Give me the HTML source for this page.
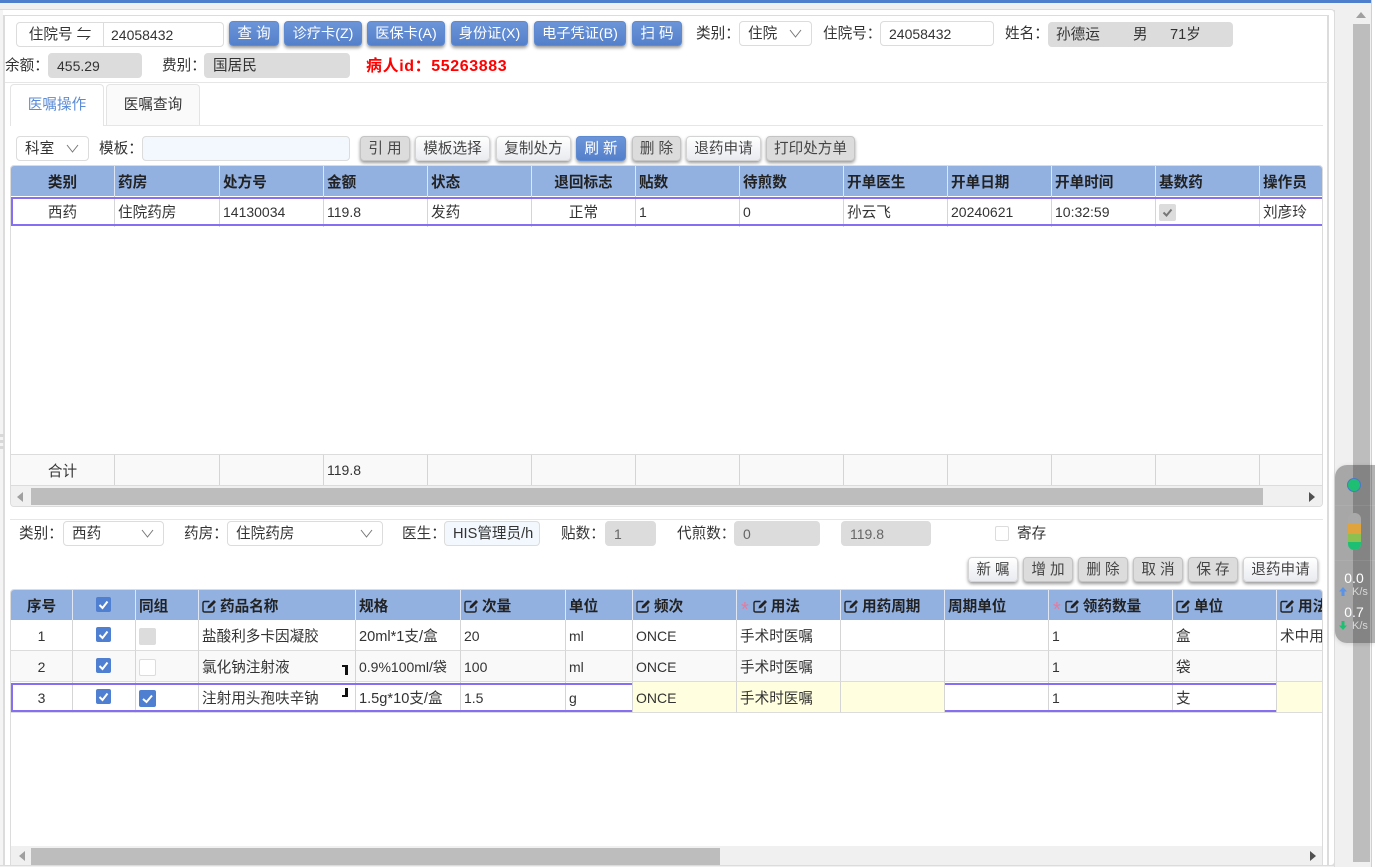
<!DOCTYPE html>
<html lang="zh-CN"><head><meta charset="utf-8"><title>医嘱操作</title>
<style>
html,body{margin:0;padding:0;width:1375px;height:867px;overflow:hidden;background:#fff}
body{font-family:"Liberation Sans","Noto Sans CJK SC",sans-serif;font-size:14.6px;color:#333;position:relative}
.a{position:absolute;box-sizing:border-box;white-space:nowrap}
.n,td.n{font-size:14px}
.m{font-size:14.2px}
.l{line-height:27px;height:25px}
.f{height:25px;line-height:25px;border:1px solid #dcdcdc;border-radius:4px;background:#fff;padding-left:8px;color:#333}
.d{background:#dcdcdc;border-color:#dcdcdc}
.s{background:#f2f8fd}
.b{height:25px;line-height:25px;border-radius:4px;text-align:center;border:1px solid #c9c9c9;box-shadow:0 2px 3px rgba(0,0,0,.4);color:#444}
.bl{background:linear-gradient(#6c95d8,#5480cb);border-color:#5e8ad2;color:#fff}
.gr{background:#dcdcdc;border-color:#c4c4c4}
.li{background:linear-gradient(#fff,#e9ebf0);border-color:#d4d4d4}
.sel svg{position:absolute;right:9px;top:7px}
table{border-collapse:separate;border-spacing:0;table-layout:fixed;position:absolute}
td{box-sizing:border-box;padding:0 0 0 3px;border-right:1px solid #d5d5d5;white-space:nowrap;overflow:hidden;color:#333}
tr.h td{background:#92b1e1;font-weight:700;color:#222;height:30px;border-right:1px solid #dfe7f3}
tr.r td{border-bottom:1px solid #dcdcdc;height:31px;padding-top:1px}
td.c{text-align:center;padding-left:0;padding-right:0}
td.z,tr.h td.z{border-right:0}
.ln{position:absolute;background:#e6e6e6}
.pu{position:absolute;background:#866ff0}
.cb{position:absolute;width:15px;height:15px;border-radius:2px;background:#4f7fd0}
.cb svg,.cg svg{position:absolute;left:0;top:0}
.cg{position:absolute;width:17px;height:17px;border-radius:2px}
.e{display:inline-block;vertical-align:-2px;margin:0 3px 0 0}
.st{color:#e9799b;font-weight:400;font-size:20px;line-height:0;position:relative;top:5px;margin:0 4px 0 0}
</style></head><body>
<!-- top chrome -->
<div class="a" style="left:0;top:0;width:1371px;height:3px;background:#4e7fcc"></div>
<div class="a" style="left:0;top:3px;width:1371px;height:864px;background:#f0f0f0"></div>
<div class="a" style="left:1371px;top:0;width:4px;height:867px;background:#fff;border-left:1px solid #d0d0d0"></div>
<div class="a" style="left:-4px;top:9px;width:1339px;height:857px;background:#fff;border:1px solid #dcdcdc;border-radius:4px"></div>
<div class="a" style="left:0;top:10px;width:3px;height:855px;background:#f4f4f4"></div>
<div class="a" style="left:3px;top:15px;width:1326px;height:851px;background:#fff;border:1px solid #dcdcdc;border-width:1px 2px 0 2px"></div>
<div class="a" style="left:0;top:434px;width:4px;height:3px;background:#d8d8d8"></div>
<div class="a" style="left:0;top:440px;width:4px;height:3px;background:#d8d8d8"></div>
<div class="a" style="left:0;top:446px;width:4px;height:3px;background:#d8d8d8"></div>

<!-- right scrollbar -->
<div class="a" style="left:1334px;top:10px;width:37px;height:857px;background:#f0f0f0;border-left:1px solid #dcdcdc"></div>
<div class="a" style="left:1353px;top:24px;width:17px;height:838px;background:#bdbdbd"></div>
<svg class="a" style="left:1356px;top:12px" width="10" height="6"><path d="M5 0L10 6H0Z" fill="#a0a0a0"/></svg>

<!-- row 1 -->
<div class="a f" style="left:16px;top:22px;width:208px;padding-left:0"><span style="display:inline-block;width:86px;height:23px;border-right:1px solid #dcdcdc;text-align:center;vertical-align:top">住院号 ⇋</span><span class="n" style="margin-left:7px">24058432</span></div>
<div class="a b bl" style="left:229px;top:21px;width:50px">查 询</div>
<div class="a b bl m" style="left:284px;top:21px;width:78px">诊疗卡(Z)</div>
<div class="a b bl m" style="left:367px;top:21px;width:78px">医保卡(A)</div>
<div class="a b bl m" style="left:451px;top:21px;width:77px">身份证(X)</div>
<div class="a b bl m" style="left:534px;top:21px;width:92px">电子凭证(B)</div>
<div class="a b bl" style="left:632px;top:21px;width:50px">扫 码</div>
<div class="a l" style="left:696px;top:21px">类别：</div>
<div class="a f sel" style="left:739px;top:21px;width:73px">住院<svg width="13" height="9"><path d="M1 1L6.500 8L12 1" fill="none" stroke="#777"/></svg></div>
<div class="a l" style="left:823px;top:21px">住院号：</div>
<div class="a f n" style="left:880px;top:21px;width:114px">24058432</div>
<div class="a l" style="left:1005px;top:21px">姓名：</div>
<div class="a f d" style="left:1048px;top:22px;width:185px;padding-left:0"><span class="a" style="left:7px;top:0">孙德运</span><span class="a" style="left:84px;top:0">男</span><span class="a" style="left:121px;top:0">71岁</span></div>

<!-- row 2 -->
<div class="a l" style="left:5px;top:53px">余额：</div>
<div class="a f d n" style="left:48px;top:53px;width:94px">455.29</div>
<div class="a l" style="left:162px;top:53px">费别：</div>
<div class="a f d" style="left:204px;top:53px;width:146px">国居民</div>
<div class="a l" style="left:366px;top:53px;color:#f00;font-weight:700;font-size:16px;letter-spacing:.6px">病人id：55263883</div>
<div class="ln" style="left:5px;top:82px;width:1323px;height:1px"></div>

<!-- tabs -->
<div class="a" style="left:10px;top:84px;width:94px;height:42px;border:1px solid #e4e4e4;border-bottom:0;border-radius:4px 4px 0 0;background:#fff;color:#5b8bd6;text-align:center;line-height:40px;z-index:2">医嘱操作</div>
<div class="a" style="left:106px;top:84px;width:94px;height:41px;border:1px solid #e4e4e4;border-bottom:0;border-radius:4px 4px 0 0;background:#fafafa;text-align:center;line-height:40px">医嘱查询</div>
<div class="ln" style="left:10px;top:125px;width:1313px;height:1px"></div>

<!-- toolbar -->
<div class="a f sel" style="left:16px;top:136px;width:73px">科室<svg width="13" height="9"><path d="M1 1L6.500 8L12 1" fill="none" stroke="#777"/></svg></div>
<div class="a l" style="left:99px;top:136px">模板：</div>
<div class="a f s" style="left:142px;top:136px;width:208px"></div>
<div class="a b gr" style="left:360px;top:136px;width:50px">引 用</div>
<div class="a b li" style="left:415px;top:136px;width:75px">模板选择</div>
<div class="a b li" style="left:496px;top:136px;width:75px">复制处方</div>
<div class="a b bl" style="left:576px;top:136px;width:50px">刷 新</div>
<div class="a b gr" style="left:632px;top:136px;width:49px">删 除</div>
<div class="a b li" style="left:686px;top:136px;width:75px">退药申请</div>
<div class="a b gr" style="left:766px;top:136px;width:89px">打印处方单</div>

<!-- table 1 -->
<div class="a" style="left:10px;top:165px;width:1313px;height:342px;border:1px solid #dcdcdc;border-radius:4px;overflow:hidden;background:#fff">
<table style="left:0;top:0;width:1311px">
<colgroup><col style="width:104px"><col style="width:105px"><col style="width:104px"><col style="width:104px"><col style="width:104px"><col style="width:104px"><col style="width:104px"><col style="width:104px"><col style="width:104px"><col style="width:104px"><col style="width:104px"><col style="width:104px"><col style="width:62px"></colgroup>
<tr class="h"><td class="c">类别</td><td>药房</td><td>处方号</td><td>金额</td><td>状态</td><td class="c">退回标志</td><td>贴数</td><td>待煎数</td><td>开单医生</td><td>开单日期</td><td>开单时间</td><td>基数药</td><td class="z">操作员</td></tr>
<tr style="height:31px"><td class="c">西药</td><td>住院药房</td><td class="n">14130034</td><td class="n">119.8</td><td>发药</td><td class="c">正常</td><td class="n">1</td><td class="n">0</td><td>孙云飞</td><td class="n">20240621</td><td class="n">10:32:59</td><td></td><td class="z">刘彦玲</td></tr>
</table>
<div class="a" style="left:0;top:288px;width:1311px;height:32px;background:#f9f9f9;border-top:1px solid #dcdcdc;border-bottom:1px solid #dcdcdc">
<table style="left:0;top:0;width:1311px;height:30px"><colgroup><col style="width:104px"><col style="width:105px"><col style="width:104px"><col style="width:104px"><col style="width:104px"><col style="width:104px"><col style="width:104px"><col style="width:104px"><col style="width:104px"><col style="width:104px"><col style="width:104px"><col style="width:104px"><col style="width:62px"></colgroup>
<tr><td class="c">合计</td><td></td><td></td><td class="n">119.8</td><td></td><td></td><td></td><td></td><td></td><td></td><td></td><td></td><td class="z"></td></tr></table></div>
<div class="a" style="left:0;top:320px;width:1311px;height:20px;background:#f0f0f0"></div>
<div class="a" style="left:20px;top:322px;width:1232px;height:17px;background:#bdbdbd"></div>
<svg class="a" style="left:6px;top:326px" width="6" height="10"><path d="M0 5L6 0V10Z" fill="#a0a0a0"/></svg>
<svg class="a" style="left:1298px;top:326px" width="6" height="10"><path d="M6 5L0 0V10Z" fill="#505050"/></svg>
</div>
<div class="pu" style="left:11px;top:197px;width:1311px;height:2px"></div>
<div class="pu" style="left:11px;top:224px;width:1311px;height:2px"></div>
<div class="pu" style="left:11px;top:197px;width:2px;height:29px"></div>
<div class="a" style="left:1159px;top:204px;width:17px;height:17px;background:#dcdcdc;border-radius:2px"><svg width="17" height="17" style="position:absolute;left:0;top:0"><path d="M4.500 8.500L7.500 11.500L12.500 5.500" fill="none" stroke="#777" stroke-width="2"/></svg></div>

<!-- form row -->
<div class="ln" style="left:10px;top:519px;width:1313px;height:1px"></div>
<div class="a l" style="left:19px;top:521px">类别：</div>
<div class="a f sel" style="left:63px;top:521px;width:101px">西药<svg width="13" height="9"><path d="M1 1L6.500 8L12 1" fill="none" stroke="#777"/></svg></div>
<div class="a l" style="left:184px;top:521px">药房：</div>
<div class="a f sel" style="left:227px;top:521px;width:156px">住院药房<svg width="13" height="9"><path d="M1 1L6.500 8L12 1" fill="none" stroke="#777"/></svg></div>
<div class="a l" style="left:402px;top:521px">医生：</div>
<div class="a f s" style="left:444px;top:521px;width:96px;overflow:hidden">HIS管理员/h</div>
<div class="a l" style="left:561px;top:521px">贴数：</div>
<div class="a f d n" style="left:605px;top:521px;width:51px;color:#666">1</div>
<div class="a l" style="left:677px;top:521px">代煎数：</div>
<div class="a f d n" style="left:734px;top:521px;width:86px;color:#666">0</div>
<div class="a f d n" style="left:841px;top:521px;width:90px;color:#666">119.8</div>
<div class="a" style="left:995px;top:526px;width:14px;height:15px;border:1px solid #dcdcdc;border-radius:2px;background:#fff"></div>
<div class="a l" style="left:1017px;top:521px">寄存</div>

<div class="a b li" style="left:968px;top:557px;width:50px">新 嘱</div>
<div class="a b gr" style="left:1023px;top:557px;width:50px">增 加</div>
<div class="a b gr" style="left:1078px;top:557px;width:50px">删 除</div>
<div class="a b gr" style="left:1133px;top:557px;width:50px">取 消</div>
<div class="a b gr" style="left:1188px;top:557px;width:50px">保 存</div>
<div class="a b li" style="left:1243px;top:557px;width:75px">退药申请</div>

<!-- table 2 -->
<div class="a" style="left:10px;top:589px;width:1313px;height:277px;border:1px solid #dcdcdc;border-bottom:0;border-radius:4px 4px 0 0;overflow:hidden;background:#fff">
<table style="left:0;top:0;width:1356px">
<colgroup><col style="width:62px"><col style="width:63px"><col style="width:63px"><col style="width:157px"><col style="width:105px"><col style="width:105px"><col style="width:67px"><col style="width:104px"><col style="width:104px"><col style="width:104px"><col style="width:104px"><col style="width:124px"><col style="width:104px"><col style="width:90px"></colgroup>
<tr class="h"><td class="c">序号</td><td></td><td>同组</td>
<td><svg class="e" width="15" height="14"><path d="M7.500 2.500H2.500Q1 2.500 1 4V11.500Q1 13 2.500 13H10.500Q12 13 12 11.500V7.500" fill="none" stroke="#222" stroke-width="1.400"/><path d="M5.500 9.500L6 7L12 1L14 3L8 9Z" fill="#222"/></svg>药品名称</td>
<td>规格</td>
<td><svg class="e" width="15" height="14"><path d="M7.500 2.500H2.500Q1 2.500 1 4V11.500Q1 13 2.500 13H10.500Q12 13 12 11.500V7.500" fill="none" stroke="#222" stroke-width="1.400"/><path d="M5.500 9.500L6 7L12 1L14 3L8 9Z" fill="#222"/></svg>次量</td>
<td>单位</td>
<td><svg class="e" width="15" height="14"><path d="M7.500 2.500H2.500Q1 2.500 1 4V11.500Q1 13 2.500 13H10.500Q12 13 12 11.500V7.500" fill="none" stroke="#222" stroke-width="1.400"/><path d="M5.500 9.500L6 7L12 1L14 3L8 9Z" fill="#222"/></svg>频次</td>
<td style="padding-left:4px"><span class="st">*</span><svg class="e" width="15" height="14"><path d="M7.500 2.500H2.500Q1 2.500 1 4V11.500Q1 13 2.500 13H10.500Q12 13 12 11.500V7.500" fill="none" stroke="#222" stroke-width="1.400"/><path d="M5.500 9.500L6 7L12 1L14 3L8 9Z" fill="#222"/></svg>用法</td>
<td><svg class="e" width="15" height="14"><path d="M7.500 2.500H2.500Q1 2.500 1 4V11.500Q1 13 2.500 13H10.500Q12 13 12 11.500V7.500" fill="none" stroke="#222" stroke-width="1.400"/><path d="M5.500 9.500L6 7L12 1L14 3L8 9Z" fill="#222"/></svg>用药周期</td>
<td>周期单位</td>
<td style="padding-left:4px"><span class="st">*</span><svg class="e" width="15" height="14"><path d="M7.500 2.500H2.500Q1 2.500 1 4V11.500Q1 13 2.500 13H10.500Q12 13 12 11.500V7.500" fill="none" stroke="#222" stroke-width="1.400"/><path d="M5.500 9.500L6 7L12 1L14 3L8 9Z" fill="#222"/></svg>领药数量</td>
<td><svg class="e" width="15" height="14"><path d="M7.500 2.500H2.500Q1 2.500 1 4V11.500Q1 13 2.500 13H10.500Q12 13 12 11.500V7.500" fill="none" stroke="#222" stroke-width="1.400"/><path d="M5.500 9.500L6 7L12 1L14 3L8 9Z" fill="#222"/></svg>单位</td>
<td><svg class="e" width="15" height="14"><path d="M7.500 2.500H2.500Q1 2.500 1 4V11.500Q1 13 2.500 13H10.500Q12 13 12 11.500V7.500" fill="none" stroke="#222" stroke-width="1.400"/><path d="M5.500 9.500L6 7L12 1L14 3L8 9Z" fill="#222"/></svg>用法</td></tr>
<tr class="r"><td class="c n">1</td><td></td><td></td><td>盐酸利多卡因凝胶</td><td>20ml*1支/盒</td><td class="n">20</td><td class="n">ml</td><td class="n">ONCE</td><td>手术时医嘱</td><td></td><td></td><td class="n">1</td><td>盒</td><td>术中用</td></tr>
<tr class="r" style="background:#f9f9f9"><td class="c n">2</td><td></td><td></td><td>氯化钠注射液</td><td class="n">0.9%100ml/袋</td><td class="n">100</td><td class="n">ml</td><td class="n">ONCE</td><td>手术时医嘱</td><td></td><td></td><td class="n">1</td><td>袋</td><td></td></tr>
<tr class="r"><td class="c n">3</td><td></td><td></td><td>注射用头孢呋辛钠</td><td>1.5g*10支/盒</td><td class="n">1.5</td><td class="n">g</td><td class="n" style="background:#ffffe0">ONCE</td><td style="background:#ffffe0">手术时医嘱</td><td style="background:#ffffe0"></td><td></td><td class="n">1</td><td>支</td><td style="background:#ffffe0"></td></tr>
</table>
<div class="a" style="left:0;top:256px;width:1311px;height:19px;background:#f0f0f0"></div>
<div class="a" style="left:20px;top:258px;width:689px;height:17px;background:#bdbdbd"></div>
<svg class="a" style="left:8px;top:261px" width="6" height="10"><path d="M0 5L6 0V10Z" fill="#a0a0a0"/></svg>
<svg class="a" style="left:1299px;top:261px" width="6" height="10"><path d="M6 5L0 0V10Z" fill="#505050"/></svg>
</div>
<div class="a" style="left:0;top:865px;width:1334px;height:1px;background:#dcdcdc"></div>

<!-- purple row 3 -->
<div class="pu" style="left:11px;top:683px;width:621px;height:2px"></div>
<div class="pu" style="left:11px;top:710px;width:621px;height:2px"></div>
<div class="pu" style="left:11px;top:683px;width:2px;height:29px"></div>
<div class="pu" style="left:945px;top:683px;width:331px;height:2px"></div>
<div class="pu" style="left:945px;top:710px;width:331px;height:2px"></div>

<!-- checkboxes -->
<div class="cb" style="left:96px;top:597px"><svg width="15" height="15"><path d="M3.500 8L6.500 11L11.500 4.500" fill="none" stroke="#fff" stroke-width="2"/></svg></div>
<div class="cb" style="left:96px;top:627px"><svg width="15" height="15"><path d="M3.500 8L6.500 11L11.500 4.500" fill="none" stroke="#fff" stroke-width="2"/></svg></div>
<div class="cb" style="left:96px;top:658px"><svg width="15" height="15"><path d="M3.500 8L6.500 11L11.500 4.500" fill="none" stroke="#fff" stroke-width="2"/></svg></div>
<div class="cb" style="left:96px;top:689px"><svg width="15" height="15"><path d="M3.500 8L6.500 11L11.500 4.500" fill="none" stroke="#fff" stroke-width="2"/></svg></div>
<div class="cg" style="left:139px;top:628px;background:#dcdcdc"></div>
<div class="cg" style="left:139px;top:659px;background:#fff;border:1px solid #dcdcdc;box-sizing:border-box"></div>
<div class="cg" style="left:139px;top:690px;background:#4f7fd0"><svg width="17" height="17"><path d="M4 9L7.500 12L13 5.500" fill="none" stroke="#fff" stroke-width="2"/></svg></div>

<!-- black corners -->
<div class="a" style="left:342px;top:665px;width:6px;height:2px;background:#111"></div>
<div class="a" style="left:345px;top:665px;width:3px;height:10px;background:#111"></div>
<div class="a" style="left:342px;top:695px;width:6px;height:2px;background:#111"></div>
<div class="a" style="left:345px;top:688px;width:3px;height:9px;background:#111"></div>

<!-- floating widget -->
<div class="a" style="left:1335px;top:465px;width:40px;height:178px;background:rgba(0,0,0,.3);border-radius:12px 0 0 12px;box-shadow:0 1px 5px rgba(0,0,0,.12)"></div>
<div class="a" style="left:1335px;top:505px;width:40px;height:1px;background:rgba(255,255,255,.08)"></div>
<div class="a" style="left:1335px;top:560px;width:40px;height:1px;background:rgba(255,255,255,.08)"></div>
<div class="a" style="left:1347px;top:478px;width:14px;height:14px;border-radius:50%;background:#1fbf73;border:1px solid #4a78c8"></div>
<div class="a" style="left:1348px;top:513px;width:13px;height:37px;border-radius:6px;overflow:hidden;background:#a9a9a9">
<div class="a" style="left:0;top:11px;width:13px;height:10px;background:#dfa43e"></div>
<div class="a" style="left:0;top:21px;width:13px;height:8px;background:#8cc152"></div>
<div class="a" style="left:0;top:29px;width:13px;height:8px;background:#1fbf73"></div>
</div>
<div class="a" style="left:1335px;top:570px;width:38px;text-align:center;color:#fff;font-size:14px;line-height:16px">0.0</div>
<svg class="a" style="left:1339px;top:587px" width="8" height="9"><path d="M4 0L8 4.500H5.500V9H2.500V4.500H0Z" fill="#5b93e6"/></svg>
<div class="a" style="left:1352px;top:586px;color:#d8d8d8;font-size:11px;line-height:12px">K/s</div>
<div class="a" style="left:1335px;top:604px;width:38px;text-align:center;color:#fff;font-size:14px;line-height:16px">0.7</div>
<svg class="a" style="left:1339px;top:621px" width="8" height="9"><path d="M4 9L8 4.500H5.500V0H2.500V4.500H0Z" fill="#1fbf73"/></svg>
<div class="a" style="left:1352px;top:620px;color:#d8d8d8;font-size:11px;line-height:12px">K/s</div>
</body></html>
